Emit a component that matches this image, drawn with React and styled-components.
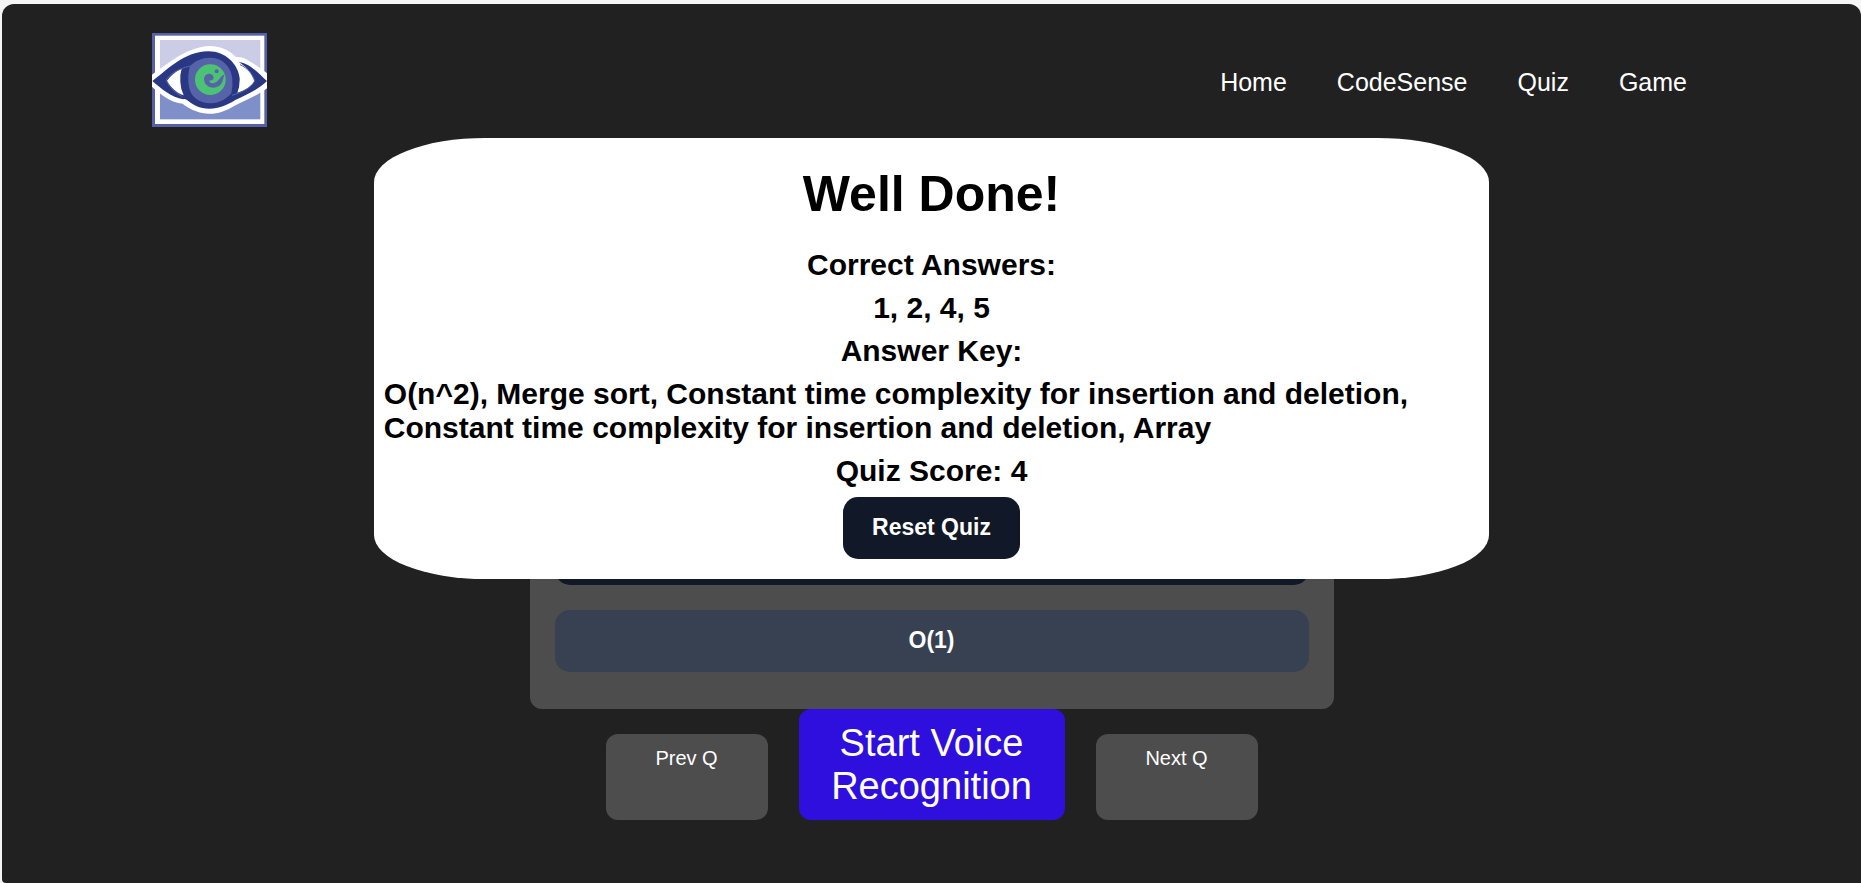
import React from "react";
import styled, { createGlobalStyle } from "styled-components";

const GlobalStyle = createGlobalStyle`
  *, *::before, *::after { box-sizing: border-box; }
  body {
    margin: 0;
    background: #f5f5f5;
    font-family: "Liberation Sans", Arial, sans-serif;
  }
`;

const Page = styled.div`
  margin: 4px 0 0 2px;
  min-height: calc(100vh - 4px);
  border-radius: 12px 12px 0 4px;
  background: #212121;
  color: #fff;
`;

const Header = styled.header`
  display: flex;
  align-items: center;
  justify-content: space-between;
  padding: 29px 149px 11px 150px;
`;

const LogoLink = styled.a`
  display: block;
  svg { display: block; }
`;

const Nav = styled.nav`
  display: flex;
  padding-top: 4px;
`;

const NavLink = styled.a`
  padding: 0 25px;
  color: #fff;
  font-size: 25px;
  line-height: 28px;
  text-decoration: none;
`;

const Stage = styled.main`
  position: relative;
  display: flex;
  flex-direction: column;
  align-items: center;
  padding: 360px 0 40px;
`;

const QuizCard = styled.section`
  display: flex;
  flex-direction: column;
  gap: 25px;
  width: 804px;
  max-width: 100%;
  padding: 25px 25px 37px;
  border-radius: 12px;
  background: #4d4d4d;
`;

const QuizButton = styled.button`
  height: 62px;
  padding: 0 29px 2px;
  border: 0;
  border-radius: 15px;
  background: ${(p) => (p.$selected ? "#374151" : "#111827")};
  color: #fff;
  font: bold 23px/28px "Liberation Sans", Arial, sans-serif;
  cursor: pointer;
`;

const Controls = styled.div`
  display: flex;
  align-items: stretch;
  gap: 31px;
`;

const StepButton = styled.button`
  display: flex;
  align-items: flex-start;
  justify-content: center;
  width: 162px;
  margin-top: 25px;
  padding: 13px 12px;
  border: 0;
  border-radius: 12px;
  background: #4d4d4d;
  color: #fff;
  font: 20px/23px "Liberation Sans", Arial, sans-serif;
  cursor: pointer;
`;

const VoiceButton = styled.button`
  width: 266px;
  padding: 13px 24px 12px;
  border: 0;
  border-radius: 12px;
  background: #2f0fdd;
  color: #fff;
  font: 38px/43px "Liberation Sans", Arial, sans-serif;
  cursor: pointer;
`;

const Result = styled.section`
  position: absolute;
  top: 0;
  left: 20%;
  right: 20%;
  display: flex;
  flex-direction: column;
  align-items: center;
  gap: 9px;
  padding: 28px 10px 20px;
  border-radius: 10%;
  background: #fff;
  color: #000;
`;

const Title = styled.h1`
  margin: 0 0 16px;
  font-size: 50px;
  line-height: 57px;
`;

const Line = styled.h2`
  margin: 0;
  font-size: 30px;
  line-height: 34px;
`;

function EyeLogo() {
  return (
    <svg width="115" height="94" viewBox="36 39 345 282" preserveAspectRatio="none" aria-hidden="true">
      <rect x="36" y="39" width="345" height="282" fill="#5560a6" />
      <rect x="45" y="47" width="328" height="265" fill="#fff" />
      <rect x="60" y="60" width="301" height="120" fill="#cbcce6" />
      <rect x="60" y="180" width="301" height="118" fill="#7f8fc9" />
      <path
        fill="#fff"
        d="M36 164C84 132 138 80 212 78C250 79 276 97 288 112C308 106 345 132 381 160V205C352 228 312 242 284 257C256 274 228 283 204 281C168 278 144 264 128 251C92 248 62 223 36 200Z"
      />
      <path
        fill="#2a3884"
        d="M37 183C82 150 130 96 204 94C256 93 294 132 299 174Q300 200 294 217C318 210 336 196 344 183C336 158 318 140 296 126C330 130 356 160 381 183C352 212 314 225 286 240C260 256 238 266 208 266C178 266 158 254 146 244C138 238 134 236 130 238C94 232 64 206 37 183Z"
      />
      <path fill="#fff" d="M81 182C92 166 108 153 125 146Q119 164 121 186Q122 208 131 226C108 218 92 202 81 182Z" />
      <path fill="none" stroke="#5763a9" strokeWidth="3" d="M150 138C112 147 87 164 78 181C89 203 105 218 127 230" />
      <path fill="#fff" d="M297 140C315 148 333 163 342 183C332 202 313 211 292 218Q301 198 300 178Q300 158 297 140Z" />
      <path fill="none" stroke="#5763a9" strokeWidth="3" d="M300 134C322 144 337 161 344 183C333 204 308 216 276 226" />
      <path
        fill="#5763a9"
        d="M150 138C166 121 190 112 212 113C250 114 274 142 277 176Q279 198 274 220C258 238 238 249 213 250C176 250 149 228 146 194Q142 164 150 138Z"
      />
      <circle cx="211" cy="179" r="46" fill="#4cc274" />
      <path
        fill="#5763a9"
        d="M192 178C192 164 206 156 217 165C225 173 219 184 208 181C207 191 219 192 229 186C239 179 242 168 254 163C248 175 250 190 236 199C216 209 193 199 192 178Z"
      />
      <circle cx="230" cy="154" r="6" fill="#5763a9" />
    </svg>
  );
}

const links = ["Home", "CodeSense", "Quiz", "Game"];

export default function App() {
  return (
    <>
      <GlobalStyle />
      <Page>
        <Header>
          <LogoLink href="#home" aria-label="CodeSense">
            <EyeLogo />
          </LogoLink>
          <Nav>
            {links.map((name) => (
              <NavLink key={name} href={`#${name.toLowerCase()}`}>{name}</NavLink>
            ))}
          </Nav>
        </Header>
        <Stage>
          <QuizCard>
            <QuizButton type="button" aria-label="O(n^2)" />
            <QuizButton type="button" $selected>O(1)</QuizButton>
          </QuizCard>
          <Controls>
            <StepButton type="button">Prev Q</StepButton>
            <VoiceButton type="button">Start Voice Recognition</VoiceButton>
            <StepButton type="button">Next Q</StepButton>
          </Controls>
          <Result>
            <Title>Well Done!</Title>
            <Line>Correct Answers:</Line>
            <Line>1, 2, 4, 5</Line>
            <Line>Answer Key:</Line>
            <Line>
              O(n^2), Merge sort, Constant time complexity for insertion and deletion,
              Constant time complexity for insertion and deletion, Array
            </Line>
            <Line>Quiz Score: 4</Line>
            <QuizButton type="button">Reset Quiz</QuizButton>
          </Result>
        </Stage>
      </Page>
    </>
  );
}
